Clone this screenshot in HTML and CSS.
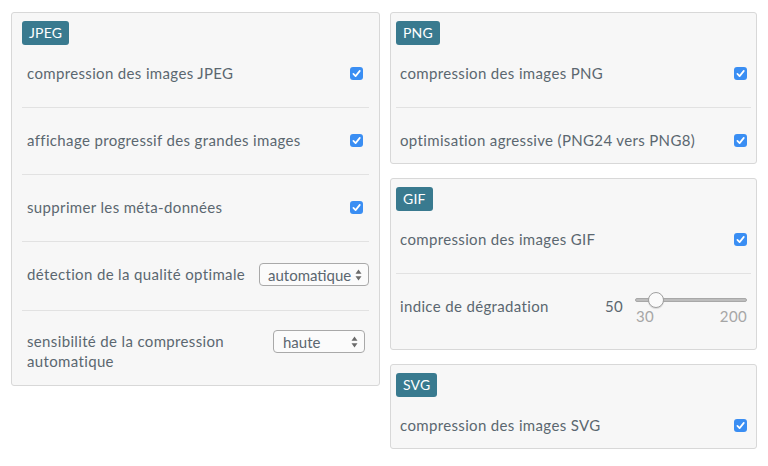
FILE: index.html
```html
<!DOCTYPE html>
<html lang="fr">
<head>
<meta charset="utf-8">
<title>Compression des images</title>
<link rel="stylesheet" href="styles.css">
</head>
<body>
<div class="page">
  <section class="panel panel-wide">
    <span class="badge">JPEG</span>
    <div class="row">
      <span class="label">compression des images JPEG</span>
      <span class="cb"><svg viewBox="0 0 13 13" width="13" height="13"><rect x="0" y="0" width="13" height="13" rx="3" fill="#3a8ef3"/><path d="M3.4 6.9 L5.6 9.1 L9.8 3.9" fill="none" stroke="#fff" stroke-width="1.7" stroke-linecap="round" stroke-linejoin="round"/></svg></span>
    </div>
    <div class="row">
      <span class="label">affichage progressif des grandes images</span>
      <span class="cb"><svg viewBox="0 0 13 13" width="13" height="13"><rect x="0" y="0" width="13" height="13" rx="3" fill="#3a8ef3"/><path d="M3.4 6.9 L5.6 9.1 L9.8 3.9" fill="none" stroke="#fff" stroke-width="1.7" stroke-linecap="round" stroke-linejoin="round"/></svg></span>
    </div>
    <div class="row">
      <span class="label">supprimer les méta-données</span>
      <span class="cb"><svg viewBox="0 0 13 13" width="13" height="13"><rect x="0" y="0" width="13" height="13" rx="3" fill="#3a8ef3"/><path d="M3.4 6.9 L5.6 9.1 L9.8 3.9" fill="none" stroke="#fff" stroke-width="1.7" stroke-linecap="round" stroke-linejoin="round"/></svg></span>
    </div>
    <div class="row">
      <span class="label">détection de la qualité optimale</span>
      <span class="select select-auto">
        <span class="select-text">automatique</span>
        <svg class="arrows" viewBox="0 0 7 12" width="7" height="12"><path d="M3.5 0.5 L6.5 4.8 L0.5 4.8 Z M3.5 11.5 L6.5 7.2 L0.5 7.2 Z" fill="#6b6b6b"/></svg>
      </span>
    </div>
    <div class="row row-last row-multi">
      <span class="label">sensibilité de la compression automatique</span>
      <span class="select select-haute">
        <span class="select-text">haute</span>
        <svg class="arrows" viewBox="0 0 7 12" width="7" height="12"><path d="M3.5 0.5 L6.5 4.8 L0.5 4.8 Z M3.5 11.5 L6.5 7.2 L0.5 7.2 Z" fill="#6b6b6b"/></svg>
      </span>
    </div>
  </section>

  <div class="column">
    <section class="panel panel-narrow">
      <span class="badge">PNG</span>
      <div class="row">
        <span class="label">compression des images PNG</span>
        <span class="cb"><svg viewBox="0 0 13 13" width="13" height="13"><rect x="0" y="0" width="13" height="13" rx="3" fill="#3a8ef3"/><path d="M3.4 6.9 L5.6 9.1 L9.8 3.9" fill="none" stroke="#fff" stroke-width="1.7" stroke-linecap="round" stroke-linejoin="round"/></svg></span>
      </div>
      <div class="row row-last">
        <span class="label">optimisation agressive (PNG24 vers PNG8)</span>
        <span class="cb"><svg viewBox="0 0 13 13" width="13" height="13"><rect x="0" y="0" width="13" height="13" rx="3" fill="#3a8ef3"/><path d="M3.4 6.9 L5.6 9.1 L9.8 3.9" fill="none" stroke="#fff" stroke-width="1.7" stroke-linecap="round" stroke-linejoin="round"/></svg></span>
      </div>
    </section>

    <section class="panel panel-narrow">
      <span class="badge">GIF</span>
      <div class="row">
        <span class="label">compression des images GIF</span>
        <span class="cb"><svg viewBox="0 0 13 13" width="13" height="13"><rect x="0" y="0" width="13" height="13" rx="3" fill="#3a8ef3"/><path d="M3.4 6.9 L5.6 9.1 L9.8 3.9" fill="none" stroke="#fff" stroke-width="1.7" stroke-linecap="round" stroke-linejoin="round"/></svg></span>
      </div>
      <div class="row row-last row-slider">
        <span class="label">indice de dégradation</span>
        <span class="value">50</span>
        <div class="slider">
          <div class="track-area">
            <div class="track"></div>
            <div class="thumb" style="left: 11.2%"></div>
          </div>
          <div class="range-labels"><span>30</span><span>200</span></div>
        </div>
      </div>
    </section>

    <section class="panel panel-narrow">
      <span class="badge">SVG</span>
      <div class="row row-last">
        <span class="label">compression des images SVG</span>
        <span class="cb"><svg viewBox="0 0 13 13" width="13" height="13"><rect x="0" y="0" width="13" height="13" rx="3" fill="#3a8ef3"/><path d="M3.4 6.9 L5.6 9.1 L9.8 3.9" fill="none" stroke="#fff" stroke-width="1.7" stroke-linecap="round" stroke-linejoin="round"/></svg></span>
      </div>
    </section>
  </div>
</div>
</body>
</html>
```

FILE: styles.css
```css
* { box-sizing: border-box; }

html, body {
  margin: 0;
  padding: 0;
  background: #ffffff;
}

body {
  font-family: Lato, "Open Sans", sans-serif;
  font-size: 15px;
  letter-spacing: 0.35px;
  color: #5b6770;
}

.page {
  display: flex;
  align-items: flex-start;
  gap: 10px;
  padding: 12px 11px;
}

.column {
  display: flex;
  flex-direction: column;
  gap: 14px;
  flex: 0 0 367px;
}

.panel {
  display: flex;
  flex-direction: column;
  align-items: stretch;
  background: #f7f7f7;
  border: 1px solid #d8d8d8;
  border-radius: 3px;
  padding: 8px 10px 0;
}

.panel-wide {
  flex: 0 0 369px;
}

.panel-narrow {
  padding: 8px 5px 0;
}

.badge {
  align-self: flex-start;
  height: 24px;
  line-height: 24px;
  padding: 0 7px;
  border-radius: 3px;
  background: #397a8f;
  color: #ffffff;
  font-size: 14px;
  letter-spacing: 0.2px;
  margin-bottom: -4px;
}

.row {
  display: flex;
  align-items: flex-start;
  gap: 12px;
  padding: 22px 5px 24px 5px;
  line-height: 20px;
  border-bottom: 1px solid #e2e2e2;
}

.panel-narrow .row {
  padding-left: 4px;
  padding-right: 4px;
}

.row-last {
  border-bottom: none;
  padding-bottom: 13px !important;
}

.row-multi {
  padding-top: 20px;
  padding-bottom: 14px !important;
}

.label {
  flex: 1;
}

.cb {
  display: flex;
  width: 13px;
  height: 20px;
  align-items: center;
  padding-top: 1px;
  margin-right: 1px;
}

.panel-narrow .cb {
  margin-right: 0;
}

.select {
  position: relative;
  display: flex;
  align-items: center;
  height: 23px;
  margin-top: -1px;
  border: 1px solid #a9a9a9;
  border-radius: 4px;
  background: #fbfbfb;
  color: #5b6770;
  font-size: 15px;
  letter-spacing: 0;
  padding: 0 18px 0 9px;
  margin-right: -5px;
}

.select-auto {
  width: 110px;
  padding-left: 8px;
}

.select-haute {
  width: 92px;
  margin-right: -1px;
}

.select .arrows {
  position: absolute;
  right: 6px;
  top: 5px;
}

.row-slider {
  padding-bottom: 25px !important;
}

.value {
  color: #5b6770;
}

.slider {
  width: 112px;
  margin-top: -4px;
  margin-right: 0;
}

.track-area {
  position: relative;
  height: 16px;
}

.track {
  position: absolute;
  left: 0;
  right: 0;
  top: 6px;
  height: 4px;
  border-radius: 2px;
  background: #bdbdbd;
  border: 1px solid #a8a8a8;
}

.thumb {
  position: absolute;
  top: 0;
  width: 16px;
  height: 16px;
  border-radius: 50%;
  background: #fafafa;
  border: 1px solid #a0a0a0;
  box-shadow: 0 1px 1px rgba(0,0,0,0.12);
}

.range-labels {
  display: flex;
  justify-content: space-between;
  line-height: 16px;
  color: #a6a6a6;
  font-size: 15px;
  padding-left: 1px;
}
```
